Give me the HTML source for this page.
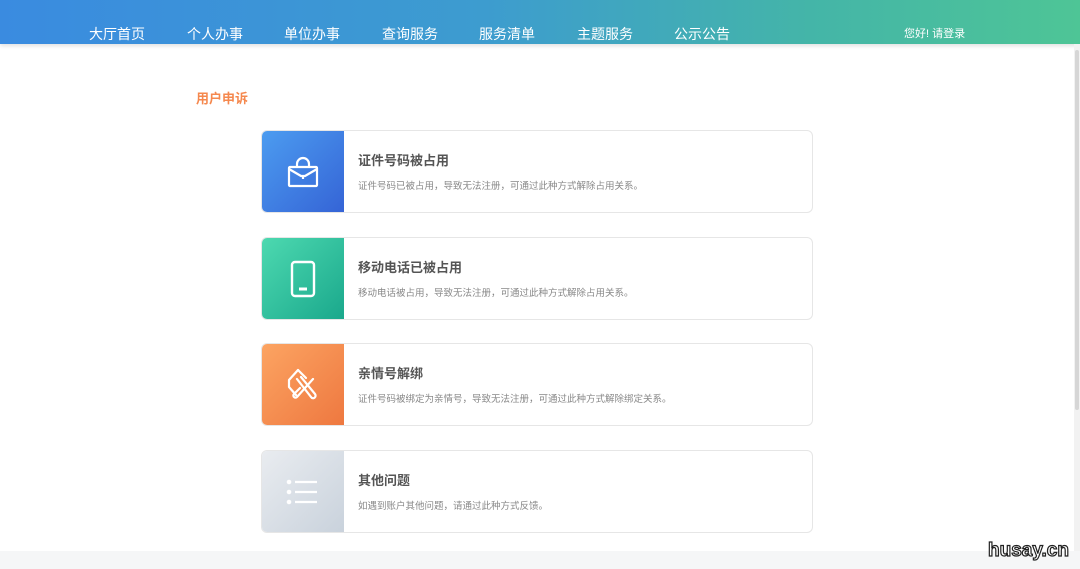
<!DOCTYPE html>
<html><head><meta charset="utf-8"><style>
*{margin:0;padding:0;box-sizing:border-box}
body{width:1080px;height:569px;overflow:hidden;background:#fff;font-family:"Liberation Sans","Noto Sans CJK SC",sans-serif;position:relative}
.hdr{position:absolute;left:0;top:0;width:1080px;height:44px;background:linear-gradient(90deg,#3a8be0 0%,#3d9ccf 45%,#44b5a8 75%,#4ec596 100%);box-shadow:0 2px 4px rgba(0,0,0,.12)}
.nav{position:absolute;top:24px;color:#fff;font-size:14px}
.login{position:absolute;left:904px;top:25px;color:#fff;font-size:11px}
.sb{position:absolute;right:0;top:44px;width:6px;height:507px;background:#f2f2f2}
.sb i{position:absolute;left:1px;top:6px;width:4px;height:360px;background:#d6d6d6;border-radius:2px}
.ttl{position:absolute;left:196px;top:88px;color:#f5884e;font-size:13px;font-weight:bold}
.card{position:absolute;left:261px;width:552px;height:83px;border:1px solid #e6e6e6;border-radius:6px;background:#fff;overflow:hidden}
.ic{position:absolute;left:0;top:0;width:82px;height:100%;display:flex;align-items:center;justify-content:center}
.card h3{position:absolute;left:96px;top:19px;font-size:13px;color:#555;font-weight:bold}
.card p{position:absolute;left:96px;top:47px;font-size:9.5px;color:#888}
.bot{position:absolute;left:0;top:551px;width:1080px;height:18px;background:#f5f6f7}
.wm{position:absolute;left:988px;top:540px;font-size:19px;font-weight:bold;color:#fff;-webkit-text-stroke:1.2px #222;font-family:"Liberation Sans",sans-serif}
</style></head><body>
<div class="hdr">
<span class="nav" style="left:89px">大厅首页</span>
<span class="nav" style="left:187px">个人办事</span>
<span class="nav" style="left:284px">单位办事</span>
<span class="nav" style="left:382px">查询服务</span>
<span class="nav" style="left:479px">服务清单</span>
<span class="nav" style="left:577px">主题服务</span>
<span class="nav" style="left:674px">公示公告</span>
<span class="login">您好! 请登录</span>
</div>
<div class="sb"><i></i></div>
<div class="ttl">用户申诉</div>

<div class="card" style="top:130px"><div class="ic" style="background:linear-gradient(135deg,#4c9cf0,#3564d6)">
<svg width="34" height="34" viewBox="0 0 34 34" fill="none" stroke="#fff" stroke-width="2.2"><path d="M11 12V9a6 6 0 0 1 12 0v3"/><rect x="3" y="12" width="28" height="19" rx="1"/><path d="M3 14l12 7h4l12-7M17 21v3"/></svg></div>
<h3>证件号码被占用</h3><p>证件号码已被占用，导致无法注册，可通过此种方式解除占用关系。</p></div>

<div class="card" style="top:237px"><div class="ic" style="background:linear-gradient(135deg,#4dd9b0,#1aa88c)">
<svg width="30" height="40" viewBox="0 0 30 40" fill="none" stroke="#fff" stroke-width="2.4"><rect x="4" y="3" width="22" height="34" rx="3"/><path d="M11 30h8" stroke-width="3"/></svg></div>
<h3>移动电话已被占用</h3><p>移动电话被占用，导致无法注册，可通过此种方式解除占用关系。</p></div>

<div class="card" style="top:343px"><div class="ic" style="background:linear-gradient(135deg,#fca462,#ee7840)">
<svg width="40" height="40" viewBox="0 0 40 40" fill="none" stroke="#fff" stroke-width="2.2" stroke-linejoin="round" stroke-linecap="round"><path d="M15 5L6 15v7l7 8"/><path d="M15 5l8 8"/><path d="M14 14l14 18c2 3 6 0 4-3L18 12"/><path d="M30 14L14 32c-2 2-5-1-3-3l6-6"/></svg></div>
<h3>亲情号解绑</h3><p>证件号码被绑定为亲情号，导致无法注册，可通过此种方式解除绑定关系。</p></div>

<div class="card" style="top:450px"><div class="ic" style="background:linear-gradient(135deg,#e9ecf0,#c9d2dc)">
<svg width="34" height="28" viewBox="0 0 34 28" fill="#fff" stroke="#fff" stroke-width="2.2"><circle cx="3" cy="4" r="1.2"/><circle cx="3" cy="14" r="1.2"/><circle cx="3" cy="24" r="1.2"/><path d="M9 4h22M9 14h22M9 24h22"/></svg></div>
<h3>其他问题</h3><p>如遇到账户其他问题，请通过此种方式反馈。</p></div>

<div class="bot"></div>
<div class="wm">husay.cn</div>
</body></html>
